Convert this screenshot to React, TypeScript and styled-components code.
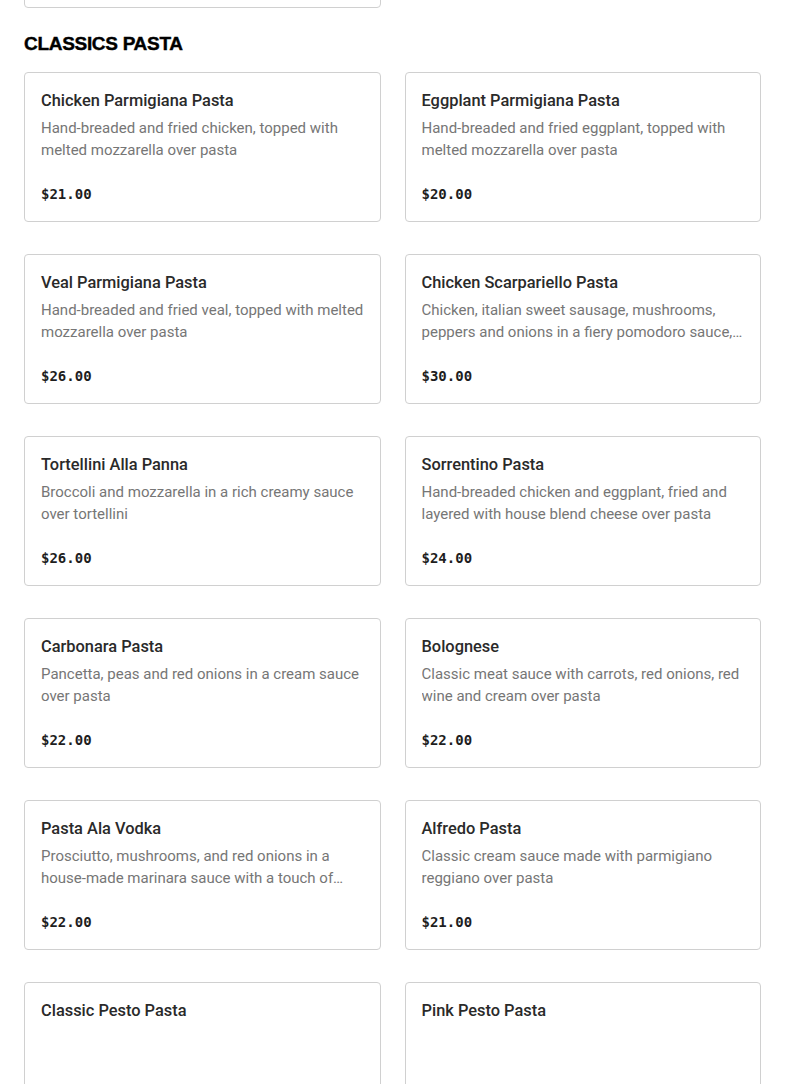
import React from "react";
import styled, { createGlobalStyle } from "styled-components";

const GlobalStyle = createGlobalStyle`
  body {
    margin: 0;
    background: #fff;
    font-family: Roboto, "Liberation Sans", Arial, sans-serif;
    overflow: hidden;
  }
`;

const Page = styled.div`
  padding: 0 24px;
`;

const Grid = styled.div`
  display: grid;
  grid-template-columns: 1fr 1fr;
  column-gap: 24px;
  row-gap: 32px;
`;

const PrevSection = styled(Grid)`
  margin-top: -142px;
`;

const Heading = styled.h2`
  margin: 22px 0 14px;
  font-family: "Liberation Sans", Arial, sans-serif;
  font-weight: 900;
  font-size: 19px;
  line-height: 28px;
  letter-spacing: -0.3px;
  text-transform: uppercase;
  color: #000;
  -webkit-text-stroke: 0.4px #000;
`;

const Card = styled.div`
  border: 1px solid #d0d0d0;
  border-radius: 4px;
  padding: 16px;
  height: 150px;
  box-sizing: border-box;
  display: flex;
  flex-direction: column;
`;

const Title = styled.div`
  font-size: 16.4px;
  line-height: 24px;
  font-weight: 500;
  color: #2a2a2a;
`;

const Desc = styled.div`
  margin-top: 4px;
  font-size: 15px;
  line-height: 22px;
  color: #767676;
  min-height: 44px;
  display: -webkit-box;
  -webkit-line-clamp: 2;
  -webkit-box-orient: vertical;
  overflow: hidden;
`;

const Price = styled.div`
  margin-top: 21px;
  font-family: "DejaVu Sans Mono", "Liberation Mono", monospace;
  font-weight: bold;
  font-size: 14px;
  line-height: 24px;
  color: #1e1e1e;
`;

type Item = { name: string; desc?: string; price?: string };

const items: Item[] = [
  { name: "Chicken Parmigiana Pasta", desc: "Hand-breaded and fried chicken, topped with melted mozzarella over pasta", price: "$21.00" },
  { name: "Eggplant Parmigiana Pasta", desc: "Hand-breaded and fried eggplant, topped with melted mozzarella over pasta", price: "$20.00" },
  { name: "Veal Parmigiana Pasta", desc: "Hand-breaded and fried veal, topped with melted mozzarella over pasta", price: "$26.00" },
  { name: "Chicken Scarpariello Pasta", desc: "Chicken, italian sweet sausage, mushrooms, peppers and onions in a fiery pomodoro sauce, over pasta", price: "$30.00" },
  { name: "Tortellini Alla Panna", desc: "Broccoli and mozzarella in a rich creamy sauce over tortellini", price: "$26.00" },
  { name: "Sorrentino Pasta", desc: "Hand-breaded chicken and eggplant, fried and layered with house blend cheese over pasta", price: "$24.00" },
  { name: "Carbonara Pasta", desc: "Pancetta, peas and red onions in a cream sauce over pasta", price: "$22.00" },
  { name: "Bolognese", desc: "Classic meat sauce with carrots, red onions, red wine and cream over pasta", price: "$22.00" },
  { name: "Pasta Ala Vodka", desc: "Prosciutto, mushrooms, and red onions in a house-made marinara sauce with a touch of cream", price: "$22.00" },
  { name: "Alfredo Pasta", desc: "Classic cream sauce made with parmigiano reggiano over pasta", price: "$21.00" },
  { name: "Classic Pesto Pasta" },
  { name: "Pink Pesto Pasta" },
];

const MenuCard = ({ item }: { item: Item }) => (
  <Card>
    <Title>{item.name}</Title>
    {item.desc && <Desc>{item.desc}</Desc>}
    {item.price && <Price>{item.price}</Price>}
  </Card>
);

export default function App() {
  return (
    <Page>
      <GlobalStyle />
      <PrevSection>
        <Card />
      </PrevSection>
      <Heading>Classics Pasta</Heading>
      <Grid>
        {items.map((it) => (
          <MenuCard key={it.name} item={it} />
        ))}
      </Grid>
    </Page>
  );
}
